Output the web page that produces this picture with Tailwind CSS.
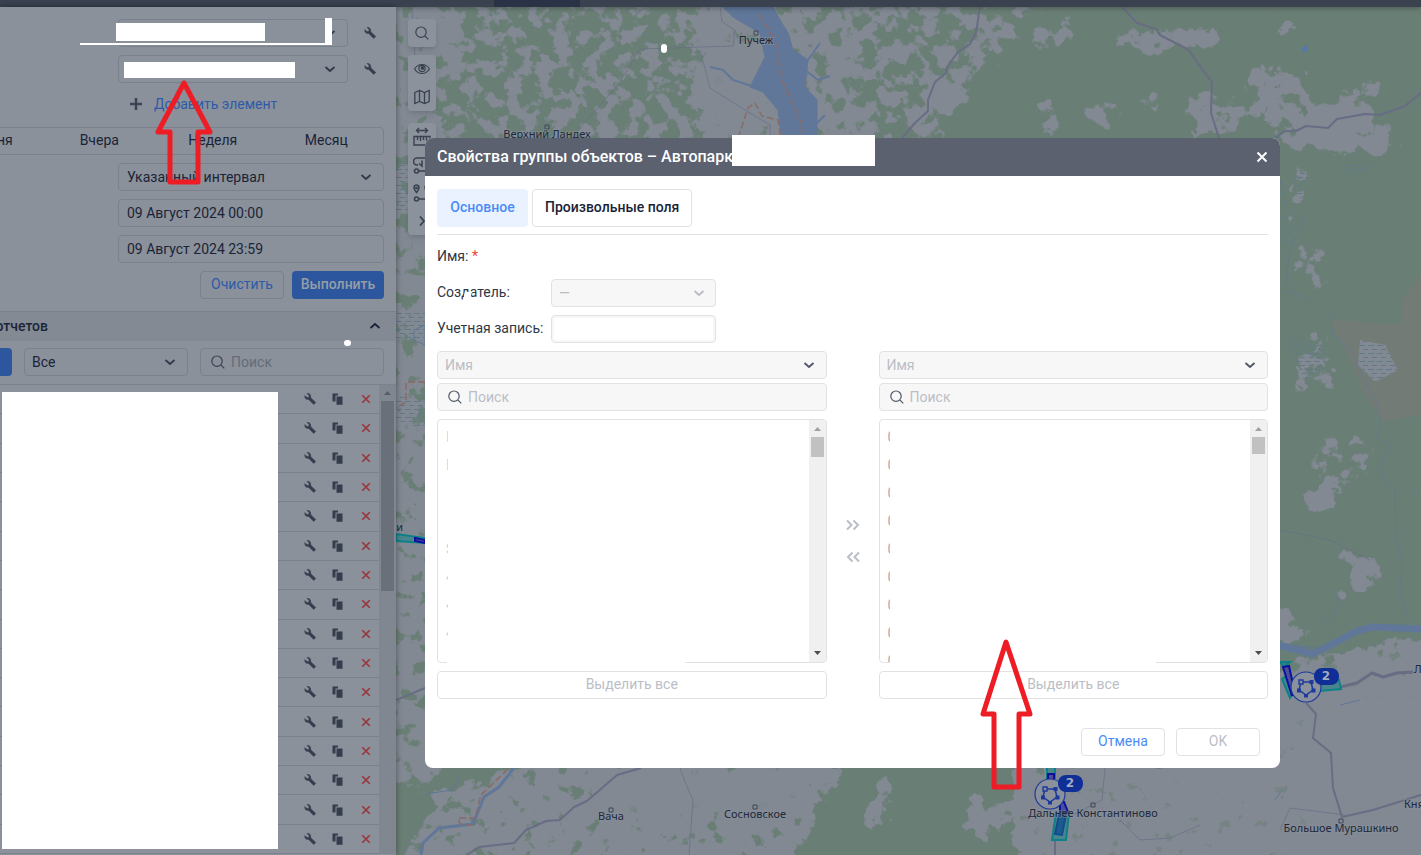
<!DOCTYPE html>
<html lang="ru">
<head>
  <meta charset="UTF-8" />
  <title>Свойства группы объектов</title>
  <meta name="viewport" content="width=device-width, initial-scale=1" />
  <script src="https://cdn.jsdelivr.net/npm/@tailwindcss/browser@4"></script>
</head>
<body class="relative h-screen overflow-hidden flex flex-col bg-[#8a919b] font-['Roboto','Liberation_Sans',sans-serif] text-sm text-[#1b2437]">

  <!-- Icons -->
  <svg class="hidden">
    <symbol id="chevron" viewBox="0 0 12 12"><path d="M1.500 4 6 8l4.500-4" fill="none" stroke="currentColor" stroke-width="1.800" /></symbol>
    <symbol id="wrench" viewBox="0 0 12 12"><path d="M3 .4 5 2.400 4.800 4.300 2.900 4.500.8 2.600C.2 5 2 7 4.700 6.500L9.700 11.600 11.800 9.500 6.800 4.700C7.200 2 5.400 0 3 .4Z" fill="currentColor" stroke="currentColor" stroke-width=".4" /></symbol>
    <symbol id="copy" viewBox="0 0 12 12"><path d="M.5.500H6V2.500H3.500V8.500H.5ZM4.500 3.500H10.500V11.800H4.500Z" fill="currentColor" /></symbol>
    <symbol id="cross" viewBox="0 0 12 12"><path d="M1.500 1.500 10.500 10.500M10.500 1.500 1.500 10.500" fill="none" stroke="currentColor" stroke-width="2" /></symbol>
    <symbol id="search" viewBox="0 0 14 14"><path d="M9.800 9.800 13.300 13.300M11.200 6.200A5.200 5.200 0 1 1 .8 6.200 5.200 5.200 0 0 1 11.200 6.200Z" fill="none" stroke="currentColor" stroke-width="1.200" /></symbol>
    <symbol id="group" viewBox="-16 -16 32 32">
      <circle r="15" fill="#8a919d" stroke="#1c3a9c" stroke-width="1.200" />
      <path d="M-5-5 5-5 7 3 0 8-7 3Z" fill="none" stroke="#1c3a9c" stroke-width="1.500" />
      <path d="M3.500-7h4v4h-4ZM5.500 1.500h4v4h-4ZM-2 7h4v3.500h-4ZM-9 1.500h4v4h-4Z" fill="#1c3a9c" />
      <path d="M-7-7h4v4h-4Z" fill="#8a919d" stroke="#1c3a9c" stroke-width="1.400" />
    </symbol>
  </svg>

  <!-- Top bar -->
  <header class="relative z-10 h-[7px] shrink-0 bg-[#3a4250] shadow-[0_0_6px_#0006] flex">
    <div class="ml-[494px] w-[86px] bg-[#2a3345]"></div>
  </header>

  <div class="flex-1 min-h-0 flex">

    <!-- Reports panel -->
    <aside class="relative z-10 w-[396px] shrink-0 overflow-hidden flex justify-end bg-[#8a919b] shadow-[0_0_6px_#0006]">
      <div class="w-[480px] shrink-0 flex flex-col">
        <div class="flex flex-col items-end gap-2 p-3">
          <div class="flex items-center gap-2">
            <div class="relative">
              <select aria-label="Шаблон" class="appearance-none w-[230px] h-7 rounded border border-[#7a818c]"><option></option></select>
              <svg class="absolute right-3 top-2 size-3 text-[#313a4b]"><use href="#chevron" /></svg>
            </div>
            <button aria-label="Настроить шаблон" class="w-7 h-7 grid place-items-center text-[#343c4e]"><svg class="size-3"><use href="#wrench" /></svg></button>
          </div>
          <div class="flex items-center gap-2">
            <div class="relative">
              <select aria-label="Объект" class="appearance-none w-[230px] h-7 rounded border border-[#7a818c]"><option></option></select>
              <svg class="absolute right-3 top-2 size-3 text-[#313a4b]"><use href="#chevron" /></svg>
            </div>
            <button aria-label="Настроить объект" class="w-7 h-7 grid place-items-center text-[#343c4e]"><svg class="size-3"><use href="#wrench" /></svg></button>
          </div>
          <button class="w-[266px] h-7 pl-3 pb-0.5 flex items-center gap-3 text-[#2f5aa8]">
            <svg class="size-3 text-[#3c4453]" viewBox="0 0 12 12"><path d="M6 0V12M0 6H12" stroke="currentColor" stroke-width="2.500" /></svg>
            Добавить элемент
          </button>
          <div class="w-full h-7 pb-0.5 grid grid-cols-4 rounded border border-[#7a818c]">
            <button>Сегодня</button><button>Вчера</button><button>Неделя</button><button>Месяц</button>
          </div>
          <div class="relative">
            <select aria-label="Интервал" class="appearance-none w-[266px] h-7 pl-2 rounded border border-[#7a818c]"><option>Указанный интервал</option></select>
            <svg class="absolute right-3 top-2 size-3 text-[#313a4b]"><use href="#chevron" /></svg>
          </div>
          <input aria-label="От" value="09 Август 2024 00:00" class="w-[266px] h-7 px-2 rounded border border-[#7a818c]" />
          <input aria-label="До" value="09 Август 2024 23:59" class="w-[266px] h-7 px-2 rounded border border-[#7a818c]" />
          <div class="flex gap-2">
            <button class="w-[84px] h-7 pb-0.5 rounded border border-[#7a818c] text-[#2f5aa8]">Очистить</button>
            <button class="w-[92px] h-7 pb-0.5 rounded bg-[#2c569e] text-[#969da7] font-medium">Выполнить</button>
          </div>
        </div>

        <div class="h-[30px] shrink-0 flex items-center justify-between pr-[15px] pb-0.5 border-t border-[#7a818c] bg-[#838a94]">
          <h2 class="w-[132px] text-right font-medium">Шаблоны отчетов</h2>
          <svg class="size-3 rotate-180"><use href="#chevron" /></svg>
        </div>
        <div class="h-11 shrink-0 flex items-start gap-3 px-3 pt-[7px] border-b border-[#7a818c]">
          <button class="flex-1 h-7 rounded bg-[#2c569e] text-[#969da7]">Создать</button>
          <div class="relative">
            <select aria-label="Тип" class="appearance-none w-[164px] h-7 pl-[7px] rounded border border-[#7a818c]"><option>Все</option></select>
            <svg class="absolute right-3 top-2 size-3 text-[#313a4b]"><use href="#chevron" /></svg>
          </div>
          <div class="relative">
            <input aria-label="Поиск шаблона" placeholder="Поиск" class="w-[184px] h-7 pl-[30px] rounded border border-[#7a818c] placeholder:text-[#656c78]" />
            <svg class="absolute left-[11px] top-[7px] size-3.5 text-[#3a4252]"><use href="#search" /></svg>
          </div>
        </div>
        <div class="flex-1 min-h-0 flex pb-px">
          <ul id="templates" class="flex-1 flex flex-col"></ul>
          <div class="w-[17px] flex flex-col items-center bg-[#808791]">
            <svg class="w-[7px] h-4 shrink-0" viewBox="0 0 7 16"><path d="M0 10 3.500 6 7 10Z" fill="#575e6a" /></svg>
            <div class="w-[13px] h-[190px] bg-[#697079]"></div>
          </div>
        </div>
      </div>
    </aside>

    <!-- Map -->
    <main class="relative flex-1 overflow-hidden bg-[#697e75]">
      <svg class="absolute inset-0 w-full h-full" viewBox="396 7 1025 848" preserveAspectRatio="xMinYMin slice">
        <defs>
          <!-- painted density plus noise, cut at a threshold, gives ragged clearings -->
          <filter id="clearings" filterUnits="userSpaceOnUse" x="396" y="7" width="1025" height="848" color-interpolation-filters="sRGB">
            <feGaussianBlur in="SourceAlpha" stdDeviation="7" result="density" />
            <feTurbulence type="fractalNoise" baseFrequency="0.065" numOctaves="5" seed="7" />
            <feColorMatrix values="0 0 0 0 0  0 0 0 0 0  0 0 0 0 0  2.2 0 0 0 -0.6" result="noise" />
            <feComposite in="noise" in2="density" operator="arithmetic" k1="0" k2="0.4" k3="0.9" k4="-0.1" />
            <feComponentTransfer result="cut"><feFuncA type="linear" slope="14" intercept="-7.200" /></feComponentTransfer>
            <feFlood flood-color="#828993" />
            <feComposite operator="in" in2="cut" />
          </filter>
          <pattern id="marsh" width="9" height="8" patternUnits="userSpaceOnUse">
            <path d="M0 1.500H6M4 5.500H9" stroke="#5f7a89" />
          </pattern>
        </defs>
        <path d="M1330 319 1402 325V300L1421 275V415L1383 422 1365 395 1345 350Z" fill="#727b76" />
        <g filter="url(#clearings)">
          <path d="M380 0H720V150H380Z" fill-opacity=".47" />
          <path d="M380 0H460V60H440V140H380Z" fill-opacity=".3" />
          <path d="M700 0H850V150H700Z" fill-opacity=".6" />
          <path d="M725 50H765V130H725Z" fill-opacity=".6" />
          <path d="M850 0H1040L1010 60 960 90 940 150H850Z" fill-opacity=".5" />
          <path d="M935 80 975 85 960 110 930 115Z" fill-opacity=".8" />
          <path d="M1040 10 1085 20 1060 55 1030 50ZM1110 30 1230 20 1220 50 1170 60 1110 50ZM1035 95H1060V140H1035ZM1085 100H1125V130H1085ZM1140 85H1165V115H1140ZM1185 90H1240V140H1185Z" fill-opacity=".6" />
          <path d="M1250 65H1310V105L1380 70V120L1400 130V160L1330 155 1290 150 1240 105ZM1270 10H1300V35H1270Z" fill-opacity=".62" />
          <path d="M1306 112 1350 118 1345 152 1308 140Z" fill-opacity=".7" />
          <path d="M380 140H440V440H380Z" fill-opacity=".58" />
          <path d="M380 440H440V780H380Z" fill-opacity=".62" />
          <path d="M1280 165H1310V230H1280ZM1300 330H1340V400H1280V420ZM1360 340H1400V380H1360ZM1310 430H1375V490H1310ZM1290 240H1330V290H1290Z" fill-opacity=".46" />
          <path d="M1300 492 1318 488 1345 495 1325 515 1308 512Z" fill-opacity=".95" />
          <path d="M1330 545 1390 560 1370 595 1330 605 1350 575ZM1270 600 1310 620V645H1270ZM1410 480H1421V600Z" fill-opacity=".7" />
          <path d="M1270 665 1340 650 1440 630V870H1010V760H1270Z" fill-opacity=".72" />
          <path d="M1310 700H1430V870H1310Z" fill-opacity=".3" />
          <path d="M380 760H470L450 800H380Z" fill-opacity=".3" />
          <path d="M430 800 520 760H850L790 870H400Z" fill-opacity=".68" />
          <path d="M600 770H820L780 810H600Z" fill-opacity=".3" />
          <path d="M870 775 900 770 890 830 860 830ZM960 790 1010 800 1000 850 960 830Z" fill-opacity=".6" />
        </g>
        <path d="M1360 340 1385 345 1398 370 1375 382 1358 365Z" fill="#828993" />
        <path d="M1360 340 1385 345 1398 370 1375 382 1358 365ZM1280 215 1298 225 1292 245 1280 242ZM1283 335 1328 345 1325 370 1305 380ZM1290 175 1310 170 1300 200ZM1340 165 1380 165 1345 178ZM396 160H425V210H396ZM396 310H425V340H396ZM396 395 425 400V430L396 420Z" fill="url(#marsh)" />

        <!-- water -->
        <g fill="none" stroke="#607799" stroke-linejoin="round">
          <path d="M723 7H773L780 20 788 33 793 50 808 60 805 87 817 100V140H782L778 110 763 92 750 87 765 57 760 33 733 17Z" fill="#607799" />
          <path d="M755 87 733 80 723 70 710 67M808 60 820 43M805 70 818 80 830 76M815 125 825 115" stroke-width="2" />
          <path d="M1278 645 1313 654 1340 640 1357 631 1373 627 1421 629" stroke-width="7" />
          <path d="M1330 310 1333 335 1350 350 1362 375 1375 400 1382 424 1376 438 1390 445 1378 470 1395 490 1396 540 1402 560 1400 590 1408 620M1280 180 1285 205 1303 220 1290 250 1285 290 1310 300M1335 590C1345 600 1335 620 1322 622" stroke-opacity=".55" />
          <path d="M514 768 499 787 484 797 473 824 439 828 423 843 421 855" stroke-width="3" />
          <path d="M425 794 452 790 460 775M1290 645 1330 650M1282 790 1275 800M1340 705 1360 700M414 330 425 325V345L414 340Z" />
        </g>
        <circle cx="1305" cy="49" r="3" fill="#5878a8" />

        <!-- roads and borders -->
        <g fill="none" stroke="#686d84" stroke-width="2" stroke-linejoin="round">
          <path d="M980 7 976 33 970 44 958 52 947 67 946 73 935 82 928 100V111L915 123 902 138" />
          <path d="M1122 7 1137 23 1156 29 1160 35 1189 50 1201 68 1212 82 1211 113 1219 138" />
          <path d="M1275 138 1285 131H1296L1306 126 1328 128 1337 119 1365 114 1380 115 1405 106 1421 93" />
          <path d="M1306 703 1316 714 1313 738 1331 753 1333 788 1342 817 1373 810 1421 795" />
          <path d="M1340 687 1357 683 1372 673 1383 677 1397 673 1413 672" stroke-width="3" />
          <path d="M641 768 617 775 587 801 574 807 560 820 546 821 526 830 514 843 479 847 467 855" />
          <path d="M1055 840V855M396 700 425 688" />
          <path d="M720 7 722 22 735 30 733 46 640 49 618 85 578 130M700 50 710 88 745 110 770 125V138M680 768 685 782 693 800 689 855M1105 768 1102 800 1060 822M1120 820 1140 840 1170 838 1200 825M1280 530 1330 540 1370 560M1345 815 1290 808 1280 830M415 60 412 8" stroke-width="1" stroke-opacity=".7" />
          <path d="M760 15 775 40 782 80 800 120 803 138M738 138 748 108 755 103 762 116 778 120 781 138M508 769 481 795 475 818H458L460 824 473 825M425 382H406V402L396 408" stroke="#8a6a65" stroke-width="1.500" stroke-dasharray="7 3" />
        </g>

        <!-- routes -->
        <g stroke="#0d8188" stroke-width="2" fill="#0d8188" fill-opacity=".5">
          <path d="M396 534 425 538V543L396 541Z" />
          <path d="M1047 766H1055V778H1047ZM1056 813H1069L1066 840H1052Z" />
          <path d="M1280 662 1290 662 1284 667ZM1282 679 1290 698 1294 692 1286 676ZM1320 684 1339 680 1341 689 1320 691Z" />
        </g>
        <g stroke="#0c109c" stroke-width="2" fill="#4a4f9a">
          <path d="M415 538 425 540V543L415 541ZM1048 774H1054V780H1048ZM1060 802H1064L1068 812H1060ZM1283 667 1289 666 1293 684 1292 696Z" />
          <path d="M1059 815H1066L1062 835 1055 834Z" fill="#1d5a8e" stroke="#124d8b" />
        </g>

        <!-- places -->
        <g fill="none" stroke="#3f4759"><path d="M754 31h4v4h-4ZM545 125h4v4h-4ZM609 808h4v4h-4ZM753 805h4v4h-4ZM1091 803h4v4h-4ZM1339 819h4v4h-4Z" /></g>
        <g class="font-['Noto_Sans',sans-serif] text-[11px]" fill="#20283a" stroke="#8a919b" stroke-width="2" stroke-opacity=".5" paint-order="stroke" text-anchor="middle">
          <text x="756" y="44">Пучеж</text>
          <text x="547" y="138">Верхний Ландех</text>
          <text x="611" y="820">Вача</text>
          <text x="755" y="818">Сосновское</text>
          <text x="1093" y="817">Дальнее Константиново</text>
          <text x="1341" y="832">Большое Мурашкино</text>
          <text x="1404" y="808" text-anchor="start">Княгинино</text>
          <text x="1414" y="673" text-anchor="start">Лысково</text>
          <text x="403" y="531" text-anchor="end">Южи</text>
        </g>

        <use href="#group" x="1034" y="778" width="32" height="32" />
        <use href="#group" x="1290" y="671" width="32" height="32" />
        <g class="font-['DejaVu_Sans',sans-serif] text-xs font-bold" text-anchor="middle" fill="#0f2e96">
          <rect x="1058" y="775" width="25" height="17" rx="8" />
          <rect x="1314" y="668" width="25" height="17" rx="8" />
          <text x="1070" y="787" fill="#a3abc0">2</text>
          <text x="1326" y="680" fill="#a3abc0">2</text>
        </g>
      </svg>

      <!-- Map tools -->
      <div class="absolute left-3 top-3 w-7 flex flex-col text-[#3a4252]">
        <button aria-label="Поиск на карте" class="h-7 mb-2 grid place-items-center rounded bg-[#8b929c] shadow-md"><svg class="size-3.5"><use href="#search" /></svg></button>
        <div class="mb-3 flex flex-col rounded bg-[#8b929c] shadow-md">
          <button aria-label="Видимость" class="h-7 grid place-items-center">
            <svg class="size-4" viewBox="0 0 16 16" fill="none" stroke="currentColor" stroke-width="1.200"><path d="M.6 8C4 2 12 2 15.400 8 12 14 4 14 .6 8Z" /><circle cx="8" cy="7.500" r="3.200" /><circle cx="8.500" cy="7" r="1.300" fill="currentColor" /></svg>
          </button>
          <button aria-label="Слои карты" class="h-7 grid place-items-center">
            <svg class="size-4" viewBox="0 0 16 16" fill="none" stroke="currentColor" stroke-width="1.300"><path d="M.8 3.500 5.500 1.500 10.500 3.500 15.200 1.500V12.500L10.500 14.500 5.500 12.500.8 14.500ZM5.500 1.500V12.500M10.500 3.500V14.500" /></svg>
          </button>
        </div>
        <div class="flex flex-col rounded bg-[#8b929c] shadow-md">
          <button aria-label="Линейка" class="h-7 grid place-items-center">
            <svg class="w-[18px] h-5" viewBox="0 0 18 20" fill="none" stroke="currentColor" stroke-width="1.400"><path d="M3.500 3.500H14.500M6 1 3.500 3.500 6 6M12 1 14.500 3.500 12 6M1 9.500H17V18H1ZM4.500 10V13M7.500 10V14M10.500 10V13M13.500 10V14" /></svg>
          </button>
          <button aria-label="Маршрут" class="h-7 grid place-items-center">
            <svg class="w-[18px] h-5" viewBox="0 0 18 20" fill="none" stroke="currentColor" stroke-width="1.600"><path d="M5 10H4A3.500 3.500 0 0 1 4 3H14M6 8.500 9 11V5.500M5.500 16H13" /><circle cx="3.500" cy="16" r="2" /><circle cx="15" cy="16" r="2" /></svg>
          </button>
          <button aria-label="Точки" class="h-7 grid place-items-center">
            <svg class="w-[18px] h-5" viewBox="0 0 18 20" fill="none" stroke="currentColor" stroke-width="1.600"><path d="M3.500 9.500C-.5 5 1 2 3.500 2S7.500 5 3.500 9.500ZM14.500 9.500C10.500 5 12 2 14.500 2S18.500 5 14.500 9.500ZM5.500 16H13" /><circle cx="3.500" cy="5" r=".6" /><circle cx="3.500" cy="16" r="2" /><circle cx="15" cy="16" r="2" /></svg>
          </button>
          <button aria-label="Ещё" class="h-7 grid place-items-center"><svg class="size-3 -rotate-90"><use href="#chevron" /></svg></button>
        </div>
      </div>
    </main>
  </div>

  <!-- Group properties dialog -->
  <section role="dialog" aria-labelledby="dialog-title" class="absolute z-20 left-[425px] right-[141px] top-[138px] rounded-lg overflow-hidden bg-white">
    <div class="h-[38px] px-3 flex items-center justify-between bg-[#5b616f] text-white">
      <h1 id="dialog-title" class="text-base font-medium">Свойства группы объектов – Автопарк</h1>
      <button aria-label="Закрыть"><svg class="size-3"><use href="#cross" /></svg></button>
    </div>
    <div class="p-3 pt-[13px]">
      <div class="flex gap-1 pb-[7px] border-b border-[#e2e2e4]">
        <button class="w-[91px] h-[38px] pb-0.5 rounded bg-[#ebf2ff] text-[#4a8cf7] font-medium">Основное</button>
        <button class="h-[38px] px-3 pb-0.5 rounded border border-[#e2e2e4] font-medium">Произвольные поля</button>
      </div>

      <div class="grid grid-cols-[114px_165px] gap-y-2 items-center mt-2 text-[#2f3747]">
        <div class="h-7 pb-0.5 flex items-center">Имя:&nbsp;<span class="text-[#f0433a]">*</span></div>
        <div></div>
        <label for="creator" class="pb-0.5">Создатель:</label>
        <div class="relative">
          <select id="creator" disabled class="appearance-none w-full h-7 pl-[7px] rounded border border-[#e2e2e4] bg-[#f7f7f7] text-[#b9bcc4] opacity-100"><option>—</option></select>
          <svg class="absolute right-[11px] top-2 size-3 text-[#b9bcc4]"><use href="#chevron" /></svg>
        </div>
        <label for="account" class="pb-0.5">Учетная запись:</label>
        <input id="account" class="h-7 rounded border border-[#e2e2e4] bg-white ring-2 ring-inset ring-[#f7f7f7]" />
      </div>

      <div class="flex mt-2">
        <div class="flex-1 flex flex-col">
          <div class="relative mb-1">
            <select aria-label="Поле слева" class="appearance-none w-full h-7 pl-[7px] rounded border border-[#e2e2e4] bg-[#f7f7f7] text-[#bbbec6]"><option>Имя</option></select>
            <svg class="absolute right-3 top-2 size-3 text-[#4f5665]"><use href="#chevron" /></svg>
          </div>
          <div class="relative mb-2">
            <input aria-label="Поиск слева" placeholder="Поиск" class="w-full h-7 pl-[30px] rounded border border-[#e2e2e4] bg-[#f7f7f7] placeholder:text-[#bbbec6]" />
            <svg class="absolute left-[11px] top-[7px] size-3.5 text-[#4f5665]"><use href="#search" /></svg>
          </div>
          <div class="relative h-[244px] mb-2 flex justify-between rounded border border-[#e2e2e4] overflow-hidden">
            <ul id="left-list" class="pl-2 pt-[3px] text-[#cfd2d8]"></ul>
            <div class="w-[17px] flex flex-col items-center bg-[#f0f0f0]">
              <svg class="w-[7px] h-[17px] shrink-0" viewBox="0 0 7 17"><path d="M0 11 3.500 7 7 11Z" fill="#a0a0a0" /></svg>
              <div class="w-[13px] h-5 bg-[#c1c1c1]"></div>
              <svg class="w-[7px] h-[17px] mt-auto" viewBox="0 0 7 17"><path d="M0 6 3.500 10 7 6Z" fill="#4d4d4d" /></svg>
            </div>
          </div>
          <button disabled class="h-7 pb-0.5 rounded border border-[#e2e2e4] text-[#bbbec6]">Выделить все</button>
        </div>

        <div class="w-[52px] flex flex-col items-center gap-2 pt-[162px] text-[#bbbec6]">
          <button aria-label="Добавить" class="h-6 grid place-items-center"><svg class="size-3.5" viewBox="0 0 14 14" fill="none" stroke="currentColor" stroke-width="2"><path d="M1 2.500 5.500 7 1 11.500M7.500 2.500 12 7 7.500 11.500" /></svg></button>
          <button aria-label="Убрать" class="h-6 grid place-items-center"><svg class="size-3.5 rotate-180" viewBox="0 0 14 14" fill="none" stroke="currentColor" stroke-width="2"><path d="M1 2.500 5.500 7 1 11.500M7.500 2.500 12 7 7.500 11.500" /></svg></button>
        </div>

        <div class="flex-1 flex flex-col">
          <div class="relative mb-1">
            <select aria-label="Поле справа" class="appearance-none w-full h-7 pl-[7px] rounded border border-[#e2e2e4] bg-[#f7f7f7] text-[#bbbec6]"><option>Имя</option></select>
            <svg class="absolute right-3 top-2 size-3 text-[#4f5665]"><use href="#chevron" /></svg>
          </div>
          <div class="relative mb-2">
            <input aria-label="Поиск справа" placeholder="Поиск" class="w-full h-7 pl-[30px] rounded border border-[#e2e2e4] bg-[#f7f7f7] placeholder:text-[#bbbec6]" />
            <svg class="absolute left-[11px] top-[7px] size-3.5 text-[#4f5665]"><use href="#search" /></svg>
          </div>
          <div class="relative h-[244px] mb-2 flex justify-between rounded border border-[#e2e2e4] overflow-hidden">
            <ul id="right-list" class="pl-2 pt-[3px] text-[#a9acb5]"></ul>
            <div class="w-[17px] flex flex-col items-center bg-[#f0f0f0]">
              <svg class="w-[7px] h-[17px] shrink-0" viewBox="0 0 7 17"><path d="M0 11 3.500 7 7 11Z" fill="#a0a0a0" /></svg>
              <div class="w-[13px] h-[17px] bg-[#c1c1c1]"></div>
              <svg class="w-[7px] h-[17px] mt-auto" viewBox="0 0 7 17"><path d="M0 6 3.500 10 7 6Z" fill="#4d4d4d" /></svg>
            </div>
          </div>
          <button disabled class="h-7 pb-0.5 rounded border border-[#e2e2e4] text-[#bbbec6]">Выделить все</button>
        </div>
      </div>

      <div class="flex justify-end gap-[11px] mt-[29px] pr-2">
        <button class="w-[84px] h-7 pb-0.5 rounded border border-[#e2e2e4] text-[#4a8cf7]">Отмена</button>
        <button disabled class="w-[84px] h-7 pb-0.5 rounded border border-[#e2e2e4] text-[#bbbec6]">OK</button>
      </div>
    </div>
  </section>

  <!-- Hidden data -->
  <div class="absolute z-30 left-[116px] top-[23px] w-[149px] h-[18px] bg-white"></div>
  <div class="absolute z-30 left-[80px] top-[43px] w-[252px] h-[2px] bg-white"></div>
  <div class="absolute z-30 left-[325px] top-[18px] w-[7px] h-[27px] bg-white"></div>
  <div class="absolute z-30 left-[124px] top-[62px] w-[171px] h-4 bg-white"></div>
  <div class="absolute z-30 left-[2px] top-[392px] w-[276px] h-[457px] bg-white"></div>
  <div class="absolute z-30 left-[732px] top-[135px] w-[143px] h-[31px] bg-white"></div>
  <div class="absolute z-30 left-[344px] top-[340px] w-[7px] h-[6px] rounded-full bg-white"></div>
  <div class="absolute z-30 left-[661px] top-[44px] w-[6px] h-[9px] rounded-full bg-white"></div>
  <div class="absolute z-30 left-[447px] top-[660px] w-[238px] h-[5px] bg-white"></div>
  <div class="absolute z-30 left-[890px] top-[660px] w-[266px] h-[5px] bg-white"></div>
  <div class="absolute z-30 left-[464px] top-[292px] w-[7px] h-[8px] -skew-x-12 bg-white"></div>

  <!-- Arrows -->
  <svg class="absolute z-40 left-[150px] top-[76px] w-[68px] h-[114px]" viewBox="150 76 68 114" fill="none" stroke="#ee1c24" stroke-width="5" stroke-linejoin="round">
    <path d="M184 83 158 132H170V182H198V132H210Z" />
  </svg>
  <svg class="absolute z-40 left-[974px] top-[634px] w-[64px] h-[160px]" viewBox="974 634 64 160" fill="none" stroke="#ee1c24" stroke-width="5" stroke-linejoin="round">
    <path d="M1006 642 983 714H994V787H1019V714H1030Z" />
  </svg>

  <script>
    const templates = document.getElementById('templates');
    for (let i = 0; i < 16; i++) {
      templates.innerHTML += `<li class="flex-1 flex items-center justify-end gap-2 pr-[3px] border-b border-[#7a818c] text-[#343c4e]">
        <button aria-label="Изменить" class="w-5 grid place-items-center"><svg class="size-3"><use href="#wrench" /></svg></button>
        <button aria-label="Копировать" class="w-5 grid place-items-center"><svg class="size-3"><use href="#copy" /></svg></button>
        <button aria-label="Удалить" class="w-5 grid place-items-center text-[#99353d]"><svg class="size-2.5"><use href="#cross" /></svg></button>
      </li>`;
    }

    // only the first pixels of every name are visible
    const left = document.getElementById('left-list');
    const right = document.getElementById('right-list');
    for (let i = 0; i < 9; i++) {
      right.innerHTML += '<li class="h-7 w-[2px] overflow-hidden leading-7">0</li>';
    }
    for (const first of ['П', 'П', '', '', 'S', '4', '4', '4']) {
      left.innerHTML += `<li class="h-7 w-[2px] overflow-hidden leading-7">${first}</li>`;
    }
  </script>
</body>
</html>
